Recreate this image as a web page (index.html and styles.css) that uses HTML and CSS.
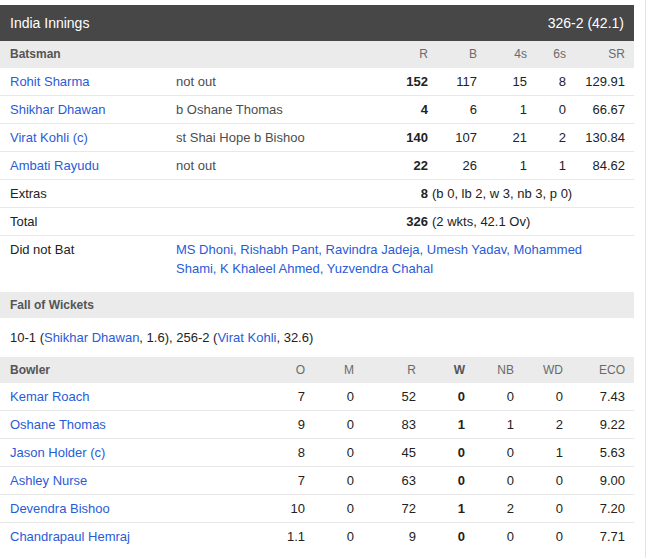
FILE: index.html
```html
<!DOCTYPE html>
<html>
<head>
<meta charset="utf-8">
<link rel="stylesheet" href="styles.css">
</head>
<body>
<div class="page">
  <div class="card">
    <div class="inn-head">
      <span>India Innings</span>
      <span>326-2 (42.1)</span>
    </div>

    <div class="bat-row sub">
      <div class="c first lbl">Batsman</div>
      <div class="c"></div>
      <div class="c r">R</div>
      <div class="c r">B</div>
      <div class="c r">4s</div>
      <div class="c r">6s</div>
      <div class="c r last">SR</div>
    </div>

    <div class="bat-row line">
      <div class="c first link">Rohit Sharma</div>
      <div class="c dis">not out</div>
      <div class="c r b">152</div>
      <div class="c r">117</div>
      <div class="c r">15</div>
      <div class="c r">8</div>
      <div class="c r last">129.91</div>
    </div>
    <div class="bat-row line">
      <div class="c first link">Shikhar Dhawan</div>
      <div class="c dis">b Oshane Thomas</div>
      <div class="c r b">4</div>
      <div class="c r">6</div>
      <div class="c r">1</div>
      <div class="c r">0</div>
      <div class="c r last">66.67</div>
    </div>
    <div class="bat-row line">
      <div class="c first link">Virat Kohli (c)</div>
      <div class="c dis">st Shai Hope b Bishoo</div>
      <div class="c r b">140</div>
      <div class="c r">107</div>
      <div class="c r">21</div>
      <div class="c r">2</div>
      <div class="c r last">130.84</div>
    </div>
    <div class="bat-row line">
      <div class="c first link">Ambati Rayudu</div>
      <div class="c dis">not out</div>
      <div class="c r b">22</div>
      <div class="c r">26</div>
      <div class="c r">1</div>
      <div class="c r">1</div>
      <div class="c r last">84.62</div>
    </div>
    <div class="bat-row line">
      <div class="c first">Extras</div>
      <div class="c"></div>
      <div class="c r b">8</div>
      <div class="c detail">(b 0, lb 2, w 3, nb 3, p 0)</div>
    </div>
    <div class="bat-row line">
      <div class="c first">Total</div>
      <div class="c"></div>
      <div class="c r b">326</div>
      <div class="c detail">(2 wkts, 42.1 Ov)</div>
    </div>
    <div class="bat-row dnb">
      <div class="c first">Did not Bat</div>
      <div class="c names link">MS Dhoni, Rishabh Pant, Ravindra Jadeja, Umesh Yadav, Mohammed Shami, K Khaleel Ahmed, Yuzvendra Chahal</div>
    </div>

    <div class="sec-head">Fall of Wickets</div>
    <div class="fow">10-1 (<span class="link">Shikhar Dhawan</span>, 1.6), 256-2 (<span class="link">Virat Kohli</span>, 32.6)</div>

    <div class="bowl-row sub">
      <div class="c first lbl">Bowler</div>
      <div class="c r">O</div>
      <div class="c r">M</div>
      <div class="c r">R</div>
      <div class="c r lbl">W</div>
      <div class="c r">NB</div>
      <div class="c r">WD</div>
      <div class="c r last">ECO</div>
    </div>
    <div class="bowl-row line">
      <div class="c first link">Kemar Roach</div>
      <div class="c r">7</div><div class="c r">0</div><div class="c r">52</div><div class="c r b">0</div><div class="c r">0</div><div class="c r">0</div><div class="c r last">7.43</div>
    </div>
    <div class="bowl-row line">
      <div class="c first link">Oshane Thomas</div>
      <div class="c r">9</div><div class="c r">0</div><div class="c r">83</div><div class="c r b">1</div><div class="c r">1</div><div class="c r">2</div><div class="c r last">9.22</div>
    </div>
    <div class="bowl-row line">
      <div class="c first link">Jason Holder (c)</div>
      <div class="c r">8</div><div class="c r">0</div><div class="c r">45</div><div class="c r b">0</div><div class="c r">0</div><div class="c r">1</div><div class="c r last">5.63</div>
    </div>
    <div class="bowl-row line">
      <div class="c first link">Ashley Nurse</div>
      <div class="c r">7</div><div class="c r">0</div><div class="c r">63</div><div class="c r b">0</div><div class="c r">0</div><div class="c r">0</div><div class="c r last">9.00</div>
    </div>
    <div class="bowl-row line">
      <div class="c first link">Devendra Bishoo</div>
      <div class="c r">10</div><div class="c r">0</div><div class="c r">72</div><div class="c r b">1</div><div class="c r">2</div><div class="c r">0</div><div class="c r last">7.20</div>
    </div>
    <div class="bowl-row">
      <div class="c first link">Chandrapaul Hemraj</div>
      <div class="c r">1.1</div><div class="c r">0</div><div class="c r">9</div><div class="c r b">0</div><div class="c r">0</div><div class="c r">0</div><div class="c r last">7.71</div>
    </div>
  </div>
</div>
</body>
</html>
```

FILE: styles.css
```css
html, body {
  margin: 0;
  padding: 0;
  background: #fff;
}

body {
  font-family: "Liberation Sans", Arial, sans-serif;
  font-size: 13px;
  color: #222;
}

.page {
  width: 646px;
  min-height: 558px;
  box-sizing: border-box;
  padding-top: 5px;
  border-right: 1px solid #e3e3e3;
}

.card {
  width: 634px;
}

.inn-head {
  display: flex;
  justify-content: space-between;
  align-items: center;
  height: 36px;
  padding: 0 10px;
  background: #474747;
  color: #fff;
  font-size: 14px;
}

.bat-row {
  display: grid;
  grid-template-columns: 176px 204px 48px 49px 50px 39px 68px;
}

.bowl-row {
  display: grid;
  grid-template-columns: 260px 45px 49px 62px 49px 49px 49px 71px;
}

.c {
  padding: 4px 0;
  line-height: 19px;
  white-space: nowrap;
}

.first {
  padding-left: 10px;
}

.last {
  padding-right: 9px;
}

.r {
  text-align: right;
}

.b {
  font-weight: bold;
}

.line {
  border-bottom: 1px solid #e8e8e8;
}

.sub {
  background: #ebebeb;
  color: #6a6a6a;
  font-size: 12px;
}

.bowl-row.sub .c {
  padding-bottom: 3px;
}

.lbl {
  font-weight: bold;
  color: #555;
}

.link {
  color: #2a5bd7;
}

.dis {
  color: #4d4d4d;
}

.detail {
  grid-column: 4 / 8;
  padding-left: 4px;
}

.names {
  grid-column: 2 / 8;
  white-space: normal;
  padding-right: 9px;
}

.dnb {
  margin-bottom: 10px;
}

.sec-head {
  background: #ebebeb;
  color: #555;
  font-size: 12px;
  font-weight: bold;
  height: 26px;
  line-height: 26px;
  padding-left: 10px;
}

.fow {
  padding: 10px;
  line-height: 19px;
}
```
